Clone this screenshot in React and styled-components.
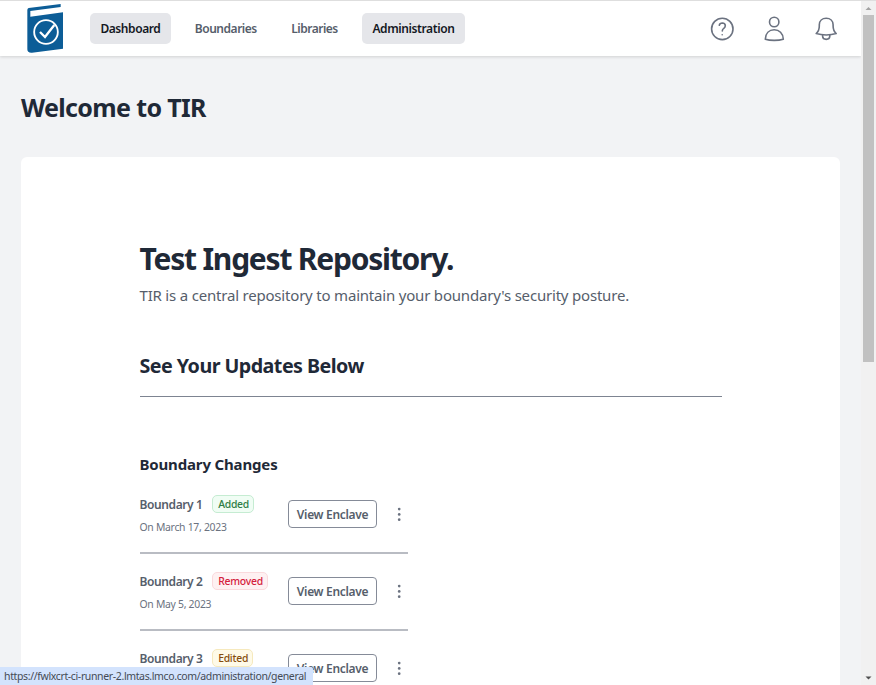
import React from "react";
import styled, { createGlobalStyle } from "styled-components";

const GlobalStyle = createGlobalStyle`
  * { box-sizing: border-box; }
  body {
    margin: 0;
    overflow: hidden;
    background: #f2f3f5;
    font-family: "Noto Sans", "Open Sans", sans-serif;
    color: #1f2937;
  }
`;

const Shell = styled.div`
  display: grid;
  grid-template-columns: 861px 15px;
  height: 685px;
  overflow: hidden;
  border-top: 1px solid #dedede;
`;

const Page = styled.div`
  display: flex;
  flex-direction: column;
  height: 684px;
  overflow: hidden;
`;

const Header = styled.header`
  display: flex;
  align-items: center;
  flex: none;
  height: 55px;
  padding: 0 20px 0 15px;
  background: #fff;
  box-shadow: 0 1px 3px rgba(0, 0, 0, 0.14);
`;

const Logo = styled.svg`
  width: 60px;
  height: 60px;
  margin-right: 15px;
  flex: none;
  align-self: flex-start;
  margin-top: -1px;
`;

const Nav = styled.nav`
  display: flex;
  gap: 14px;
`;

const NavItem = styled.a`
  display: flex;
  align-items: center;
  justify-content: flex-start;
  width: ${(p) => p.$width}px;
  height: 31px;
  padding-left: ${(p) => (p.$active ? 10.4 : 9.8)}px;
  border-radius: 5px;
  background: ${(p) => (p.$active ? "#e5e6ea" : "transparent")};
  color: ${(p) => (p.$active ? "#14181f" : "#565e6b")};
  font-size: 12px;
  font-weight: 600;
  letter-spacing: ${(p) => p.$track}px;
  white-space: nowrap;
`;

const Actions = styled.div`
  display: flex;
  gap: 24px;
  margin-left: auto;
`;

const ActionIcon = styled.svg`
  width: 28px;
  height: 28px;
  fill: none;
  stroke: #6b7280;
  stroke-width: 1.6;
  stroke-linecap: round;
  stroke-linejoin: round;
`;

const Main = styled.main`
  padding: 35px 21px 0;
`;

const PageTitle = styled.h1`
  margin: 0 0 34px;
  font-size: 25px;
  line-height: 32px;
  font-weight: 700;
  letter-spacing: -0.65px;
`;

const Card = styled.section`
  height: 700px;
  padding: 84px 118px 0 118.5px;
  border-radius: 6px;
  background: #fff;
`;

const Hero = styled.h2`
  margin: 0 0 6px;
  font-size: 30px;
  line-height: 36px;
  font-weight: 700;
  letter-spacing: -1.22px;
  white-space: nowrap;
`;

const Lead = styled.p`
  margin: 0;
  font-size: 15px;
  line-height: 24px;
  letter-spacing: -0.197px;
  color: #565e6b;
  white-space: nowrap;
`;

const UpdatesTitle = styled.h3`
  margin: 45px 0 0;
  padding-bottom: 16px;
  border-bottom: 1px solid #7d8491;
  font-size: 19.7px;
  line-height: 28px;
  font-weight: 700;
  letter-spacing: -0.54px;
`;

const ListTitle = styled.h4`
  margin: 55px 0 0;
  font-size: 15px;
  line-height: 24px;
  font-weight: 700;
  letter-spacing: -0.16px;
`;

const List = styled.ul`
  width: 268.5px;
  margin: 1px 0 0;
  padding: 0;
  list-style: none;
`;

const Row = styled.li`
  display: grid;
  grid-template-columns: 148.5px 89px 1fr;
  align-items: center;
  height: 77px;
  padding-bottom: 1px;
  border-bottom: 2px solid #b9bcc3;
`;

const Info = styled.div`
  display: flex;
  flex-direction: column;
  gap: 7px;
`;

const NameLine = styled.div`
  display: flex;
  align-items: center;
  gap: 10px;
  height: 18px;
`;

const Name = styled.span`
  padding-top: 1px;
  font-size: 12px;
  font-weight: 600;
  letter-spacing: -0.4px;
  color: #565e6b;
`;

const tones = {
  added: ["#f0fdf4", "#c5ecd2", "#2f7d46"],
  removed: ["#fef1f2", "#fadadd", "#d4213d"],
  edited: ["#fefae8", "#f6e9bd", "#854d0e"],
};

const Badge = styled.span`
  display: flex;
  align-items: center;
  height: 18px;
  padding: 0 4.2px 0 4.7px;
  border: 1px solid ${(p) => tones[p.$tone][1]};
  border-radius: 5px;
  background: ${(p) => tones[p.$tone][0]};
  color: ${(p) => tones[p.$tone][2]};
  font-size: 10.4px;
  font-weight: 500;
  letter-spacing: -0.24px;
`;

const DateText = styled.span`
  font-size: 10.4px;
  line-height: 14px;
  letter-spacing: -0.28px;
  color: #6b7280;
`;

const ViewButton = styled.button`
  height: 28px;
  padding: 0;
  border: 1px solid #858b98;
  border-radius: 4px;
  background: #fff;
  color: #565e6b;
  font: 600 12px "Noto Sans", sans-serif;
  letter-spacing: -0.32px;
`;

const Dots = styled.svg`
  width: 14px;
  height: 18px;
  margin-left: 15px;
  fill: #6b7280;
`;

const Scrollbar = styled.div`
  display: flex;
  flex-direction: column;
  align-items: center;
  height: 684px;
  background: #f1f1f1;
`;

const Thumb = styled.div`
  width: 11px;
  height: 347px;
  margin-bottom: auto;
  background: #c1c1c1;
`;

const Arrow = styled.svg`
  width: 15px;
  height: 14px;
  fill: ${(p) => p.$color};
`;

const StatusBar = styled.div`
  position: fixed;
  left: 0;
  bottom: 0;
  width: 312.5px;
  height: 18px;
  padding-left: 4px;
  border-top-right-radius: 2px;
  background: #d3e3fd;
  color: #454b55;
  font-size: 10.5px;
  line-height: 18px;
  letter-spacing: -0.363px;
  white-space: nowrap;
`;

const navItems = [
  { label: "Dashboard", width: 81, track: -0.42, active: true },
  { label: "Boundaries", width: 82.5, track: -0.47 },
  { label: "Libraries", width: 66.5, track: -0.5 },
  { label: "Administration", width: 103, track: -0.4, active: true },
];

const changes = [
  { name: "Boundary 1", tone: "added", status: "Added", date: "On March 17, 2023" },
  { name: "Boundary 2", tone: "removed", status: "Removed", date: "On May 5, 2023" },
  { name: "Boundary 3", tone: "edited", status: "Edited" },
];

function BookLogo() {
  return (
    <Logo viewBox="0 0 180 180">
      <path
        fill="#0c5d97"
        d="M41 24L137 12V21L46 33V50L144 37V146L51 158Q37 159 37 148V30Q37 25 41 24Z"
      />
      <circle cx="93" cy="96" r="35.5" fill="none" stroke="#fff" strokeWidth="5.5" />
      <path d="M75 96L90 111L118 75" fill="none" stroke="#fff" strokeWidth="7" />
    </Logo>
  );
}

export default function App() {
  return (
    <>
      <GlobalStyle />
      <Shell>
        <Page>
          <Header>
            <BookLogo />
            <Nav>
              {navItems.map((item) => (
                <NavItem
                  key={item.label}
                  $width={item.width}
                  $track={item.track}
                  $active={item.active}
                >
                  {item.label}
                </NavItem>
              ))}
            </Nav>
            <Actions>
              <ActionIcon viewBox="0 0 28 28">
                <circle cx="13.3" cy="13.9" r="10.7" />
                <path d="M10.3 10.2Q10.8 8 13.3 8Q16.3 8.1 16.3 10.8Q16.3 12.3 14.8 13.4Q13.3 14.4 13.3 16" />
                <path d="M13.2 19.7V19.8" />
              </ActionIcon>
              <ActionIcon viewBox="0 0 28 28">
                <circle cx="13.2" cy="7" r="4.7" />
                <path d="M4.3 24.2C4.5 18.3 8.2 14.8 13.2 14.8S22.1 18.3 22.3 24.2Q18.5 25.4 13.2 25.4T4.3 24.2Z" />
              </ActionIcon>
              <ActionIcon viewBox="0 0 28 28">
                <path d="M3.2 18.6Q6.3 15.8 6.3 11V9.8C6.3 5.9 9.2 3.2 13.2 3.2S20.1 5.9 20.1 9.8V11Q20.1 15.8 23.2 18.6Q18.7 20 13.2 20T3.2 18.6Z" />
                <path d="M9.6 20V21.3C9.8 25.4 16.6 25.4 16.8 21.3V20" />
              </ActionIcon>
            </Actions>
          </Header>
          <Main>
            <PageTitle>Welcome to TIR</PageTitle>
            <Card>
              <Hero>Test Ingest Repository.</Hero>
              <Lead>TIR is a central repository to maintain your boundary's security posture.</Lead>
              <UpdatesTitle>See Your Updates Below</UpdatesTitle>
              <ListTitle>Boundary Changes</ListTitle>
              <List>
                {changes.map((c) => (
                  <Row key={c.name}>
                    <Info>
                      <NameLine>
                        <Name>{c.name}</Name>
                        <Badge $tone={c.tone}>{c.status}</Badge>
                      </NameLine>
                      <DateText>{c.date || "\u00a0"}</DateText>
                    </Info>
                    <ViewButton>View Enclave</ViewButton>
                    <Dots viewBox="0 0 14 18">
                      <circle cx="7.2" cy="4.1" r="1.35" />
                      <circle cx="7.2" cy="9.4" r="1.35" />
                      <circle cx="7.2" cy="14.7" r="1.35" />
                    </Dots>
                  </Row>
                ))}
              </List>
            </Card>
          </Main>
        </Page>
        <Scrollbar>
          <Arrow viewBox="0 0 15 14" $color="#a3a3a3">
            <path d="M4.5 9L7.5 6L10.5 9Z" />
          </Arrow>
          <Thumb />
          <Arrow viewBox="0 0 15 14" $color="#505050">
            <path d="M4.5 5.5L7.5 8.5L10.5 5.5Z" />
          </Arrow>
        </Scrollbar>
      </Shell>
      <StatusBar>https://fwlxcrt-ci-runner-2.lmtas.lmco.com/administration/general</StatusBar>
    </>
  );
}
